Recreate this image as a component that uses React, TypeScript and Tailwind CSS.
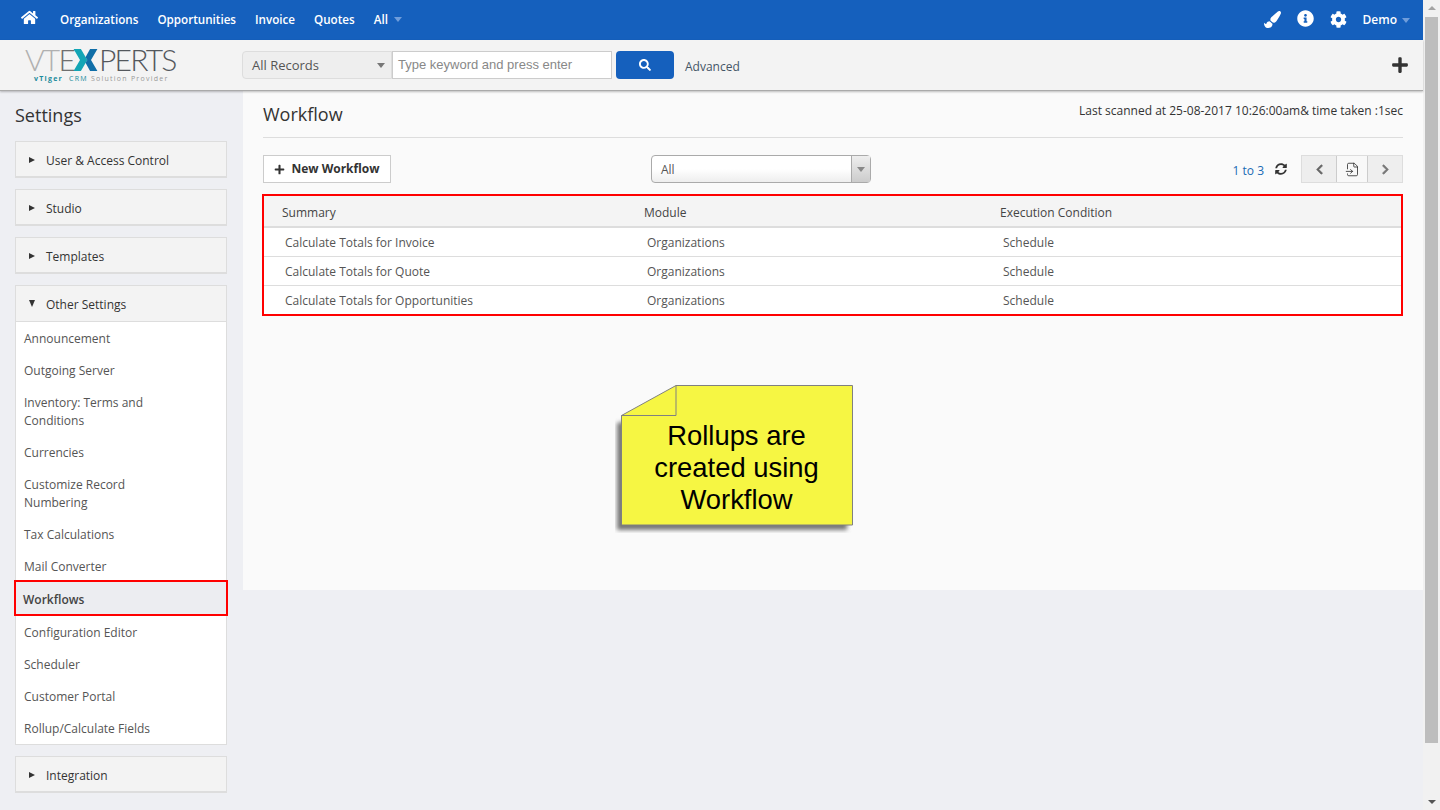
import { FaChevronLeft, FaChevronRight, FaCog, FaHome, FaInfoCircle, FaPaintBrush, FaPlus, FaSearch, FaSyncAlt } from "react-icons/fa";
import { FileInput } from "lucide-react";

const navItems = ["Organizations", "Opportunities", "Invoice", "Quotes"];
const rows = ["Calculate Totals for Invoice", "Calculate Totals for Quote", "Calculate Totals for Opportunities"];
const closedTop = ["User & Access Control", "Studio", "Templates"];

function Caret({ className }: { className: string }) {
  return <span className={`h-0 w-0 border-x-[4px] border-t-[5px] border-x-transparent ${className}`} />;
}

function SectionHead({ label, open }: { label: string; open?: boolean }) {
  return (
    <div className={`flex items-center bg-[#f3f3f3] ${open ? "h-[36px] border-b border-[#ddd]" : "h-[34px] pt-[2px]"}`}>
      <span className="flex w-[30px] justify-center pl-[1px]">
        {open ? (
          <span className="h-0 w-0 border-x-[3.5px] border-t-[7px] border-x-transparent border-t-[#333]" />
        ) : (
          <span className="h-0 w-0 border-y-[3.5px] border-l-[6px] border-y-transparent border-l-[#333]" />
        )}
      </span>
      <span className="pt-[2px] text-[12px] text-[#333]">{label}</span>
    </div>
  );
}

function SideLink({ children }: { children: React.ReactNode }) {
  return <div className="px-2 pt-[8px] pb-[6px] text-[12px] leading-[18px] text-[#555]">{children}</div>;
}

function Logo() {
  return (
    <div className="w-[152px] select-none">
      <div className="flex h-[25px] items-center text-[30px] leading-[25px] font-light tracking-[-1.8px] [font-family:Lato,sans-serif]">
        <span className="text-[#b0b0b0]">VT</span>
        <span className="text-[#6f6f6f]">E</span>
        <svg width="25" height="22" viewBox="0 0 26 24" className="mr-[1px] ml-[-1px] shrink-0">
          <polygon points="0,0 8,0 15,12 8,24 0,24 7,12" fill="#12a5b5" />
          <polygon points="18,0 26,0 19,12 26,24 18,24 13,15 15,12 13,9" fill="#0f6ea8" />
        </svg>
        <span className="text-[#54585d]">PERTS</span>
      </div>
      <div className="mt-[2px] pl-[9px] text-[7px] leading-[9px] tracking-[1.25px] whitespace-nowrap text-[#999]">
        <span className="font-bold text-[#1a8b9c]">vTiger</span> <span className="text-[#1a8b9c]">&nbsp;CRM</span> Solution Provider
      </div>
    </div>
  );
}

function StickyNote() {
  return (
    <div className="relative ml-[378px] h-[140px] w-[231px]">
      <svg width="240" height="148" viewBox="0 0 240 148" className="absolute top-0 left-[-6px]">
        <defs>
          <filter id="noteShadow" x="-10%" y="-10%" width="120%" height="120%">
            <feGaussianBlur stdDeviation="2" />
          </filter>
        </defs>
        <polygon points="40,30 232,30 232,145 2,145 2,38" fill="#777" filter="url(#noteShadow)" />
        <polygon points="61,0.5 237.5,0.5 237.5,140 6.5,140 6.5,30.5" fill="#f6f643" stroke="#808080" />
        <polyline points="6.5,30.5 61,30.5 61,0.5" fill="none" stroke="#808080" />
      </svg>
      <div className="relative flex h-full flex-col items-center justify-end pb-[9px] text-[27.4px] leading-[32px] text-black [font-family:'Liberation_Sans',sans-serif]">
        <span>Rollups are</span>
        <span>created using</span>
        <span>Workflow</span>
      </div>
    </div>
  );
}

export default function App() {
  return (
    <div className="flex h-[810px] w-[1440px] overflow-hidden bg-[#f1f1f1] [font-family:'Open_Sans',sans-serif]">
      <div className="flex w-[1423px] flex-col bg-[#eeeff3]">
        <header className="flex h-10 items-center bg-[#1560bd] text-white">
          <FaHome className="mb-[5px] ml-[21px] text-[17px]" />
          <nav className="ml-[22px] flex items-center gap-[19px] text-[11.65px] font-semibold">
            {navItems.map((item) => (
              <span key={item}>{item}</span>
            ))}
            <span className="flex items-center gap-[6px]">
              All <Caret className="border-t-[#6f9ddb]" />
            </span>
          </nav>
          <div className="mr-[13px] ml-auto flex items-center">
            <FaPaintBrush className="mb-[2px] text-[17px]" />
            <FaInfoCircle className="mb-[3px] ml-[16px] text-[17px]" />
            <FaCog className="mb-[2px] ml-[16px] text-[17px]" />
            <span className="ml-[16px] text-[12px] font-semibold">Demo</span>
            <Caret className="ml-[5px] border-t-[#6f9ddb]" />
          </div>
        </header>

        <div className="z-10 flex h-[51px] items-center border-b border-[#aaa] bg-[#f3f3f3] shadow-[0_1px_2px_rgba(0,0,0,0.25)]">
          <div className="ml-[25px] w-[217px]">
            <Logo />
          </div>
          <div className="flex h-7 w-[150px] items-center justify-between rounded-l-sm border border-[#ddd] bg-[#eee] pr-[6px] pl-[9px] text-[13px] text-[#555]">
            <span className="pt-[2px]">All Records</span>
            <Caret className="border-t-[#777]" />
          </div>
          <div className="flex h-7 w-[220px] items-center border border-[#ccc] bg-white pl-[5px] text-[13px] text-[#888] [font-family:'Liberation_Sans',sans-serif]">
            Type keyword and press enter
          </div>
          <button className="ml-1 flex h-7 w-[58px] items-center justify-center rounded-sm bg-[#1560bd] text-white">
            <FaSearch className="text-[12px]" />
          </button>
          <span className="mt-[3px] ml-[11px] text-[12px] text-[#456]">Advanced</span>
          <FaPlus className="mr-[14px] ml-auto text-[18px] text-[#333]" />
        </div>

        <div className="flex flex-1 items-start">
          <aside className="w-[243px] shrink-0 pl-[15px]">
            <h2 className="mt-[10px] mb-[12px] h-[28px] text-[18px] leading-[28px] text-[#333]">Settings</h2>
            <div className="flex w-[212px] flex-col gap-[11px]">
              {closedTop.map((label) => (
                <div key={label} className="border border-b-2 border-[#ddd]">
                  <SectionHead label={label} />
                </div>
              ))}
              <div className="border border-[#ddd] bg-white">
                <SectionHead label="Other Settings" open />
                <div>
                  <SideLink>Announcement</SideLink>
                  <SideLink>Outgoing Server</SideLink>
                  <SideLink>
                    Inventory: Terms and
                    <br />
                    Conditions
                  </SideLink>
                  <SideLink>Currencies</SideLink>
                  <SideLink>
                    Customize Record
                    <br />
                    Numbering
                  </SideLink>
                  <SideLink>Tax Calculations</SideLink>
                  <SideLink>Mail Converter</SideLink>
                  <div className="relative mx-[-2px] mt-[-2px] flex h-[36px] items-center border-2 border-[#f00] bg-[#ecedf1] pt-[3px] pl-[7px] text-[12px] font-semibold text-[#444]">
                    Workflows
                  </div>
                  <SideLink>Configuration Editor</SideLink>
                  <SideLink>Scheduler</SideLink>
                  <SideLink>Customer Portal</SideLink>
                  <SideLink>Rollup/Calculate Fields</SideLink>
                </div>
              </div>
              <div className="border border-b-2 border-[#ddd]">
                <SectionHead label="Integration" />
              </div>
            </div>
          </aside>

          <main className="h-[499px] w-[1180px] bg-[#fafafa] pt-[8px]">
            <div className="mx-5 flex h-[39px] items-start justify-between border-b border-[#ddd]">
              <h1 className="mt-[1px] text-[18px] leading-[28px] text-[#333]">Workflow</h1>
              <span className="pt-[1px] text-[12px] leading-[22px] text-[#333]">Last scanned at 25-08-2017 10:26:00am&amp; time taken :1sec</span>
            </div>

            <div className="mx-5 mt-[17px] flex h-[28px] items-center">
              <button className="flex h-[28px] w-[128px] items-center justify-center gap-[6px] border border-[#ccc] bg-white text-[12px] font-bold text-[#333]">
                <FaPlus className="text-[11px]" /> New Workflow
              </button>
              <div className="ml-[260px] flex h-[28px] w-[220px] items-stretch rounded-sm border border-[#aaa] bg-gradient-to-b from-white via-white to-[#eee]">
                <span className="flex flex-1 items-center pt-[2px] pl-[9px] text-[12px] text-[#555]">All</span>
                <span className="flex w-[19px] items-center justify-center border-l border-[#aaa] bg-gradient-to-b from-[#eee] to-[#ccc]">
                  <Caret className="border-t-[#888]" />
                </span>
              </div>
              <div className="ml-auto flex items-center">
                <span className="mt-[3px] text-[12px] text-[#1a6bb5]">1 to 3</span>
                <FaSyncAlt className="ml-[11px] text-[12px] text-[#333]" />
                <div className="ml-[14px] flex h-[28px] w-[102px] items-stretch border border-[#ddd] bg-[#eee]">
                  <span className="flex flex-1 items-center justify-center text-[#666]">
                    <FaChevronLeft className="text-[11px] [stroke-width:30px] stroke-current" />
                  </span>
                  <span className="flex w-[32px] items-center justify-center border-x border-[#ccc] bg-[#f8f8f8] text-[#222]">
                    <FileInput size={15} strokeWidth={1.25} />
                  </span>
                  <span className="flex flex-1 items-center justify-center text-[#777]">
                    <FaChevronRight className="text-[11px] [stroke-width:30px] stroke-current" />
                  </span>
                </div>
              </div>
            </div>

            <div className="mt-[11px] mr-5 ml-[19px] h-[122px] border-2 border-[#f00] bg-white">
              <table className="w-full table-fixed border-collapse text-left text-[12px]">
                <colgroup>
                  <col className="w-[362px]" />
                  <col className="w-[356px]" />
                  <col />
                </colgroup>
                <thead>
                  <tr className="h-[31px] border-b-2 border-[#ddd] bg-[#f4f4f4] text-[#444]">
                    <th className="pt-[3px] pl-[18px] font-normal">Summary</th>
                    <th className="pt-[3px] pl-[18px] font-normal">Module</th>
                    <th className="pt-[3px] pl-[18px] font-normal">Execution Condition</th>
                  </tr>
                </thead>
                <tbody>
                  {rows.map((row, i) => (
                    <tr key={row} className={`h-[29px] text-[#555] ${i < 2 ? "border-b border-[#ddd]" : ""}`}>
                      <td className="pt-[3px] pl-[21px]">{row}</td>
                      <td className="pt-[3px] pl-[21px]">Organizations</td>
                      <td className="pt-[3px] pl-[21px]">Schedule</td>
                    </tr>
                  ))}
                </tbody>
              </table>
            </div>

            <div className="mt-[69px]">
              <StickyNote />
            </div>
          </main>
        </div>
      </div>

      <div className="flex w-[17px] shrink-0 flex-col items-center pt-[6px] pb-[6px]">
        <span className="h-0 w-0 border-x-[4px] border-b-[4px] border-x-transparent border-b-[#a3a3a3]" />
        <div className="mt-[7px] h-[726px] w-[13px] bg-[#bdbdbd]" />
        <span className="mt-auto h-0 w-0 border-x-[4px] border-t-[4px] border-x-transparent border-t-[#555]" />
      </div>
    </div>
  );
}
